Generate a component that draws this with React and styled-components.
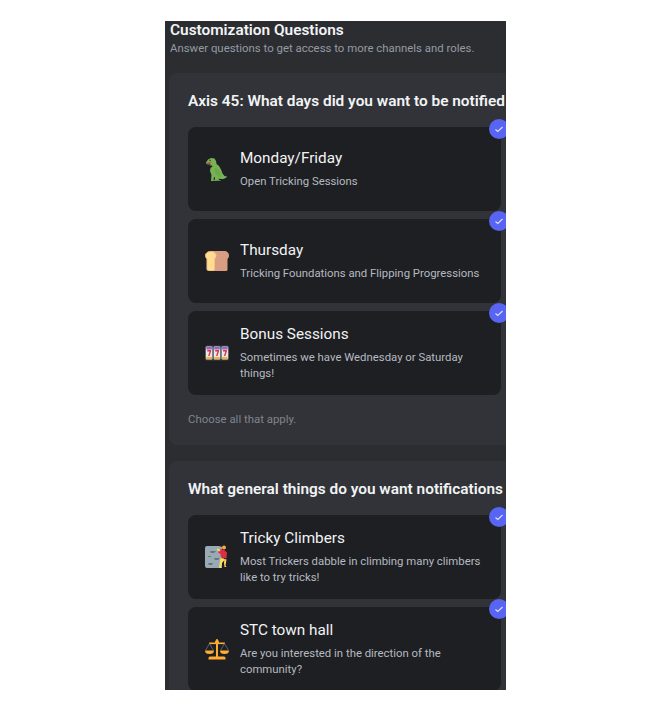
import React from 'react';
import styled, { createGlobalStyle } from 'styled-components';

const GlobalStyle = createGlobalStyle`
  html, body {
    margin: 0;
    padding: 0;
    background: #fff;
  }
`;

const Page = styled.div`
  padding: 21px 0 0 165px;
  font-family: Roboto, "Noto Sans", sans-serif;
`;

const Frame = styled.div`
  width: 341px;
  height: 669px;
  background: #2b2d31;
  overflow: hidden;
  display: flex;
  flex-direction: column;
`;

const Header = styled.div`
  flex: none;
  padding: 0 0 0 5px;
  height: 52px;
`;

const Title = styled.div`
  color: #f2f3f5;
  font-size: 15.4px;
  font-weight: 600;
  line-height: 19px;
`;

const Subtitle = styled.div`
  color: #949ba4;
  font-size: 11.4px;
  line-height: 17px;
`;

const Section = styled.section`
  flex: none;
  width: 352px;
  box-sizing: border-box;
  margin: 0 0 16px 4px;
  padding: 18px 0 18px 19px;
  background: #313338;
  border-radius: 8px;
`;

const Question = styled.h2`
  margin: 0 0 16px;
  color: #f2f3f5;
  font-size: 15.4px;
  font-weight: 600;
  line-height: 20px;
  white-space: nowrap;
`;

const Options = styled.div`
  display: flex;
  flex-direction: column;
  gap: 8px;
`;

const Card = styled.div`
  position: relative;
  width: 313px;
  height: 84px;
  box-sizing: border-box;
  padding: 0 16px 0 17px;
  display: flex;
  align-items: center;
  gap: 11px;
  background: #1e1f22;
  border-radius: 8px;
`;

const Icon = styled.svg`
  flex: none;
  width: 24px;
  height: 24px;
`;

const CardText = styled.div`
  min-width: 0;
  padding-bottom: 2px;
`;

const CardTitle = styled.div`
  color: #f2f3f5;
  font-size: 15.3px;
  font-weight: 400;
  line-height: 20px;
  margin-bottom: 5px;
`;

const CardDescription = styled.div`
  color: #b5bac1;
  font-size: 11.35px;
  line-height: 16px;
`;

const Badge = styled.div`
  position: absolute;
  top: -8px;
  right: -8px;
  width: 20px;
  height: 20px;
  border-radius: 50%;
  background: #5865f2;
  display: flex;
  align-items: center;
  justify-content: center;
`;

const Hint = styled.div`
  margin-top: 16px;
  color: #80848e;
  font-size: 11.4px;
  line-height: 16px;
`;

const Dino = () => (
  <Icon viewBox="0 0 24 24">
    <path fill="#77b255" d="M1 5.500 3 2.500 6 1l3.500.5 1.500 2.500.5 3 2.500 2 2 3.500 1.500 4 2 2.500 2.500.5-.5 1-3 1.500h-3l-2-.5.5 1.500h1.500v.8H9.500l.5-3-1-1-.5 3.500h2v.7H6L6.500 18 5 14l.5-3 2-1.500-.5-1H4.500L6 7 3.500 7.500 1.500 7z" />
    <path fill="#dd2e44" d="M2 5.800 6.500 5 5 6.500l-2.500.8z" />
    <path fill="#292f33" d="M4.500 2.800h1.200V4H4.500z" />
    <path fill="#6aa84a" d="M10 11l3 1 2 4 1 4-3-1-3-3z" />
  </Icon>
);

const Bread = () => (
  <Icon viewBox="0 0 24 24">
    <path fill="#d99e82" d="M6 2h13c3 0 5 2 5 4.500 0 1.500-.6 2.700-1.500 3.500v10.500c0 1-.8 1.500-2 1.500H6z" />
    <path fill="#ffdc8f" stroke="#f4c48a" strokeWidth="1" d="M5.500 2.500C2.500 2.500.5 4.300.5 6.500c0 1.500.7 2.700 1.500 3.300V20c0 1 .7 1.500 1.500 1.500h4.500c1 0 1.500-.6 1.500-1.500V9.800c.8-.6 1.500-1.800 1.500-3.300 0-2.200-2-4-5.500-4z" />
  </Icon>
);

const Reel = ({ x }) => (
  <g transform={`translate(${x} 0)`}>
    <rect x="0" y="5.500" width="6.600" height="13" rx="1" fill="#e6e7e8" />
    <path fill="#9266cc" d="M.5 6h5.600v2.500H.5z" />
    <path fill="#ffac33" d="M.5 16h5.600v2H.5z" />
    <path fill="#dd2e44" d="M1.500 9h3.800v1.200L3.700 15H2.300l1.500-4.500H1.500z" />
  </g>
);

const Slots = () => (
  <Icon viewBox="0 0 24 24">
    <rect x="0" y="4.500" width="24" height="15" rx="2" fill="#3b4046" />
    <Reel x={0.800} />
    <Reel x={8.700} />
    <Reel x={16.600} />
  </Icon>
);

const Climber = () => (
  <Icon viewBox="0 0 24 24">
    <path fill="#99aab5" d="M2 1h12l3 1v21H2a2 2 0 0 1-2-2V3a2 2 0 0 1 2-2z" />
    <path fill="#66757f" d="M5 6h6L9 8H6zM9 13h6l-2 2h-3zM3 18h5l-1 2H4zM3 11h3v1H3z" />
    <path fill="#ffac33" d="M17 2.500a2 2 0 1 1 4 0 2 2 0 0 1-4 0z" />
    <path fill="#dd2e44" d="M15 4l2 .5 2 .5 3 2.500-.5 6-5.500-1-.5-3.500L13 7.500z" />
    <path fill="#ffdc5d" d="M15.500 13l3.500.5.5 1.500-2.500 3-1 5h-2l.8-5.500zM19.500 14l2 .5-1 6 1 1.500h-2l-.5-4z" />
    <path fill="#ffdc5d" d="M12 3.500l2 .5 1.500 1-1 1.500L12 5z" />
  </Icon>
);

const Scales = () => (
  <Icon viewBox="0 0 24 24">
    <g fill="#ffac33">
      <path d="M11 2.500a1.300 1.300 0 0 1 2 0V20h-2z" />
      <path d="M4 5.500h16v1.600H4z" />
      <circle cx="12" cy="5" r="2" />
      <path d="M5 19.500h14a1.500 1.500 0 0 1 1.500 1.500v1.500h-17V21A1.500 1.500 0 0 1 5 19.500z" />
      <path d="M0 13.500h9a4.500 3.500 0 0 1-9 0zM15 13.500h9a4.500 3.500 0 0 1-9 0z" />
    </g>
    <path fill="none" stroke="#67757f" strokeWidth=".8" d="M.5 13.500l4-7 4 7M15.500 13.500l4-7 4 7" />
  </Icon>
);

const Check = () => (
  <svg width="12" height="12" viewBox="0 0 12 12" fill="none">
    <path d="M2.500 6.500 4.800 8.500 9.500 4" stroke="#dfe2fc" strokeWidth="1.100" />
  </svg>
);

const sections = [
  {
    question: 'Axis 45: What days did you want to be notified about?',
    hint: 'Choose all that apply.',
    options: [
      { icon: Dino, title: 'Monday/Friday', description: 'Open Tricking Sessions' },
      { icon: Bread, title: 'Thursday', description: 'Tricking Foundations and Flipping Progressions' },
      { icon: Slots, title: 'Bonus Sessions', description: 'Sometimes we have Wednesday or Saturday things!' },
    ],
  },
  {
    question: 'What general things do you want notifications for?',
    options: [
      { icon: Climber, title: 'Tricky Climbers', description: 'Most Trickers dabble in climbing many climbers like to try tricks!' },
      { icon: Scales, title: 'STC town hall', description: 'Are you interested in the direction of the community?' },
    ],
  },
];

const App = () => (
  <>
    <GlobalStyle />
    <Page>
      <Frame>
        <Header>
          <Title>Customization Questions</Title>
          <Subtitle>Answer questions to get access to more channels and roles.</Subtitle>
        </Header>
        {sections.map((section) => (
          <Section key={section.question}>
            <Question>{section.question}</Question>
            <Options>
              {section.options.map((option) => (
                <Card key={option.title}>
                  <option.icon />
                  <CardText>
                    <CardTitle>{option.title}</CardTitle>
                    <CardDescription>{option.description}</CardDescription>
                  </CardText>
                  <Badge>
                    <Check />
                  </Badge>
                </Card>
              ))}
            </Options>
            {section.hint && <Hint>{section.hint}</Hint>}
          </Section>
        ))}
      </Frame>
    </Page>
  </>
);

export default App;
